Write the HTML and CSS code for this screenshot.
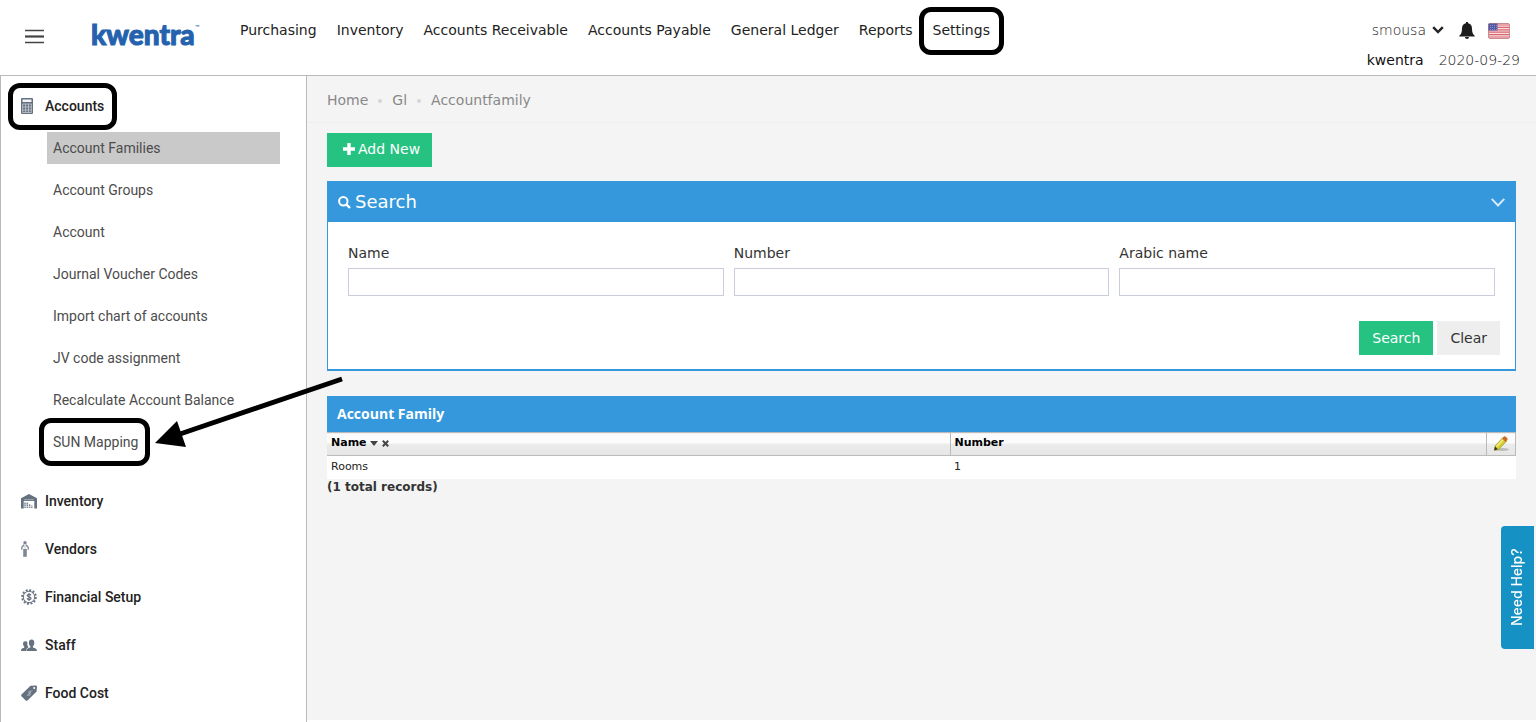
FILE: index.html
```html
<!DOCTYPE html>
<html lang="en">

<head>
    <meta charset="UTF-8">
    <meta name="viewport" content="width=device-width, initial-scale=1.0">
    <title>Account Family - kwentra</title>
    <link rel="stylesheet" href="styles.css">
</head>

<body>
    <header class="topbar">
        <button class="topbar__toggle" type="button" aria-label="Toggle menu">
            <svg width="19" height="15" viewBox="0 0 19 15">
                <path d="M0 1.500h19M0 13.500h19" stroke="#444" stroke-width="1.300" />
                <path d="M0 7.500h19" stroke="#444" stroke-width="2.200" />
            </svg>
        </button>
        <a class="logo" href="#">kwentra<span class="logo__tm">™</span></a>
        <nav class="topnav">
            <a class="topnav__link" href="#">Purchasing</a>
            <a class="topnav__link" href="#">Inventory</a>
            <a class="topnav__link" href="#">Accounts Receivable</a>
            <a class="topnav__link" href="#">Accounts Payable</a>
            <a class="topnav__link" href="#">General Ledger</a>
            <a class="topnav__link" href="#">Reports</a>
            <a class="topnav__link" href="#">Settings<span class="mark mark--settings"></span></a>
        </nav>
        <div class="account">
            <div class="account__row account__row--user">
                <button class="account__user" type="button">
                    smousa
                    <svg width="12" height="8" viewBox="0 0 12 8">
                        <path d="M1.2 1.2L6 6l4.800-4.800" fill="none" stroke="#222" stroke-width="2.400" />
                    </svg>
                </button>
                <button class="account__bell" type="button" aria-label="Notifications">
                    <svg width="16" height="17" viewBox="0 0 16 17">
                        <path d="M8 0c.8 0 1.200.5 1.200 1.200C11.800 1.800 13 3.800 13 6.500c0 4 .8 5.700 2.700 7.300v.7H.3v-.7C2.200 12.200 3 10.500 3 6.500c0-2.700 1.200-4.700 3.800-5.300C6.800.5 7.200 0 8 0zM6 15h4a2 2 0 0 1-4 0z" fill="#1c1c1c" />
                    </svg>
                </button>
                <svg class="account__flag" width="22" height="16" viewBox="0 0 22 16">
                    <rect x=".5" y=".5" width="21" height="15" rx="1.500" fill="#f7dfe0" stroke="#c98a90" />
                    <path d="M1 2h20M1 4.400h20M1 6.800h20M1 9.200h20M1 11.600h20M1 14h20" stroke="#dc6670" stroke-width="1.200" />
                    <rect x=".5" y=".5" width="9" height="7" fill="#5358a5" />
                    <path d="M2 2.500h7M2 4.500h7M2 6.500h7" stroke="#9a9dd0" stroke-width=".8" stroke-dasharray="1 1" />
                </svg>
            </div>
            <div class="account__row">
                <span>kwentra</span>
                <span class="account__date">2020-09-29</span>
            </div>
        </div>
    </header>

    <div class="page">
        <aside class="sidebar">
            <a class="section" href="#">
                <svg class="section__icon" width="16" height="16" viewBox="0 0 16 16">
                    <rect x="0" y="0" width="12" height="16" rx="1" fill="#667180" />
                    <path d="M1.500 1.500h9v2.500h-9z" fill="#f3f5f7" />
                    <path d="M1.500 6h9M1.500 9h9M1.500 12h9M1.500 14.500h9M1.700 6v8.500M4.600 6v8.500M7.500 6v8.500M10.300 6v8.500" stroke="#c5cbd2" stroke-width=".8" />
                </svg>
                Accounts
                <span class="mark mark--accounts"></span>
            </a>
            <div class="submenu">
                <a class="submenu__link submenu__link--active" href="#">Account Families</a>
                <a class="submenu__link" href="#">Account Groups</a>
                <a class="submenu__link" href="#">Account</a>
                <a class="submenu__link" href="#">Journal Voucher Codes</a>
                <a class="submenu__link" href="#">Import chart of accounts</a>
                <a class="submenu__link" href="#">JV code assignment</a>
                <a class="submenu__link" href="#">Recalculate Account Balance</a>
                <a class="submenu__link" href="#">SUN Mapping
                    <span class="mark mark--sun"></span>
                    <svg class="arrow" width="190" height="72" viewBox="0 0 190 72">
                        <path d="M187 3L25 58" stroke="#000" stroke-width="5" />
                        <path d="M0 67L22 45L31 71z" fill="#000" />
                    </svg>
                </a>
            </div>
            <a class="section" href="#">
                <svg class="section__icon" width="16" height="16" viewBox="0 0 16 16">
                    <path d="M0 15.500V5.200L8 1l8 4.200v10.300h-2.700V8H2.700v7.500z" fill="#667180" />
                    <path d="M3.200 6.700h9.600" stroke="#b8bfc7" stroke-width=".8" />
                    <path d="M4 15V9.500M6.300 15V9.500M8.600 15v-4M10.800 15v-2.500" stroke="#7d8793" stroke-width="1.500" stroke-dasharray="1.600 .3" />
                </svg>
                Inventory
            </a>
            <a class="section" href="#">
                <svg class="section__icon" width="16" height="16" viewBox="0 0 16 16">
                    <circle cx="4" cy="1.800" r="1.700" fill="#7d8793" />
                    <path d="M3 3.800L.8 6.300v2.500M5 3.800l2.200 2.500v2.500" fill="none" stroke="#7d8793" stroke-width="1.300" />
                    <path d="M2.200 8h3.600v7.800H2.200z" fill="#7d8793" />
                    <path d="M4 4.500v3" stroke="#b8bfc7" />
                </svg>
                Vendors
            </a>
            <a class="section" href="#">
                <svg class="section__icon" width="16" height="16" viewBox="0 0 16 16">
                    <circle cx="8" cy="8" r="6.900" fill="none" stroke="#667180" stroke-width="1.800" stroke-dasharray="2 1.612" />
                    <circle cx="8" cy="8" r="5.700" fill="none" stroke="#667180" />
                    <path d="M10 6.200C9.700 5.300 6.200 4.800 6.200 6.600c0 1.600 3.800 1 3.800 2.800 0 1.700-3.500 1.500-4-.1M8 4v8" fill="none" stroke="#667180" stroke-width="1.200" />
                </svg>
                Financial Setup
            </a>
            <a class="section" href="#">
                <svg class="section__icon" width="16" height="16" viewBox="0 0 16 16">
                    <path d="M0 14c0-2 .8-2.500 3.200-3.200V9.500C2.400 8.700 2 7.800 2 6.700 2 5 3 4.200 4.400 4.200c1 0 1.600.4 2 1C6 7.500 6.600 9 7.500 10.200L6 11.200 5 14z" fill="#667180" />
                    <path d="M5.500 14c.2-2.300 1-2.800 3.800-3.500V9.200C8.300 8.300 7.900 7.100 7.900 5.700c0-2 1-3.200 2.700-3.200s2.700 1.200 2.700 3.200c0 1.400-.4 2.600-1.400 3.500v1.300c2.800.7 3.900 1.200 4.100 3.500z" fill="#667180" />
                </svg>
                Staff
            </a>
            <a class="section" href="#">
                <svg class="section__icon" width="16" height="16" viewBox="0 0 16 16">
                    <path d="M9.500.8L15 .4q1 0 1 1l-.4 5.100L6.500 15.400q-.9.800-1.800 0L.5 11.200q-.8-.9 0-1.800z" fill="#667180" />
                    <circle cx="13.200" cy="2.900" r="1" fill="#fff" />
                    <path d="M9.500 6.300c-.8-.8-2.500.7-1.500 1.500s1.300.4 1.500 1.200c.2 1-1.800 1.800-2.400.7M6 10.800l5-5.300" fill="none" stroke="#c5cbd2" stroke-width=".8" />
                </svg>
                Food Cost
            </a>
        </aside>

        <main class="content">
            <nav class="breadcrumb">
                <a class="breadcrumb__link" href="#">Home</a>
                <a class="breadcrumb__link" href="#">Gl</a>
                <a class="breadcrumb__link" href="#">Accountfamily</a>
            </nav>

            <div class="content__body">
                <button class="btn btn--green btn--add" type="button">
                    <svg width="12" height="12" viewBox="0 0 12 12">
                        <path d="M6 0v12M0 6h12" stroke="#fff" stroke-width="3.400" />
                    </svg>
                    Add New
                </button>

                <form class="panel">
                    <div class="panel__head">
                        <svg width="13" height="13" viewBox="0 0 13 13">
                            <circle cx="5.300" cy="5.300" r="4.200" fill="none" stroke="#fff" stroke-width="2" />
                            <path d="M8.300 8.300l3.700 3.700" stroke="#fff" stroke-width="2.400" />
                        </svg>
                        <h2 class="panel__title">Search</h2>
                        <button class="panel__toggle" type="button" aria-label="Collapse">
                            <svg width="14" height="9" viewBox="0 0 14 9">
                                <path d="M.7.9L7 7.500 13.300.9" fill="none" stroke="#d5e9f8" stroke-width="2" />
                            </svg>
                        </button>
                    </div>
                    <div class="panel__fields">
                        <div class="field">
                            <label class="field__label" for="name">Name</label>
                            <input class="field__input" id="name" name="name" type="text">
                        </div>
                        <div class="field">
                            <label class="field__label" for="number">Number</label>
                            <input class="field__input" id="number" name="number" type="text">
                        </div>
                        <div class="field">
                            <label class="field__label" for="arabic">Arabic name</label>
                            <input class="field__input" id="arabic" name="arabic" type="text">
                        </div>
                    </div>
                    <div class="panel__actions">
                        <button class="btn btn--green" type="submit">Search</button>
                        <button class="btn btn--gray" type="reset">Clear</button>
                    </div>
                </form>

                <h3 class="grid-title">Account Family</h3>
                <table class="grid">
                    <thead>
                        <tr>
                            <th class="grid__name">Name
                                <svg width="8" height="5" viewBox="0 0 8 5">
                                    <path d="M0 0h8L4 5z" fill="#444" />
                                </svg>
                                <svg class="grid__clear" width="7" height="7" viewBox="0 0 7 7">
                                    <path d="M.8.8l5.400 5.400M6.200.8L.8 6.200" stroke="#444" stroke-width="2" />
                                </svg>
                            </th>
                            <th>Number</th>
                            <th class="grid__edit">
                                <svg width="16" height="16" viewBox="0 0 16 16">
                                    <ellipse cx="9.500" cy="13.500" rx="6.500" ry="1.500" fill="#bbb" />
                                    <path d="M2 10l8-8.500 3.700 3.500-8 8.500-4.200 1z" fill="#d5cf2f" stroke="#8b8620" stroke-width=".6" />
                                    <path d="M3.500 10.500l7-7.300" stroke="#f3f08c" stroke-width="1.400" />
                                    <path d="M9 2.500L11 .6q1-.6 1.800.2l1.500 1.500q.7.900 0 1.800l-1.800 1.900z" fill="#cf6a25" />
                                    <path d="M2 10.500L1.200 14.300l3.700-1z" fill="#2d3020" />
                                </svg>
                            </th>
                        </tr>
                    </thead>
                    <tbody>
                        <tr>
                            <td>Rooms</td>
                            <td>1</td>
                            <td></td>
                        </tr>
                    </tbody>
                </table>
                <p class="total">(1 total records)</p>
            </div>
        </main>
    </div>

    <button class="help" type="button">Need Help?</button>
</body>

</html>
```

FILE: styles.css
```css
* {
    box-sizing: border-box;
}

body {
    margin: 0;
    min-height: 100vh;
    display: flex;
    flex-direction: column;
    background: #fff;
    color: #333;
    font: 14px/20px "DejaVu Sans", sans-serif;
}

a {
    color: inherit;
    text-decoration: none;
}

button {
    padding: 0;
    border: 0;
    background: none;
    color: inherit;
    font: inherit;
    cursor: pointer;
}

svg {
    display: block;
    flex-shrink: 0;
}

/* topbar */
.topbar {
    display: flex;
    align-items: flex-start;
    height: 76px;
    padding: 20px 16px 0 25px;
    border-bottom: 1px solid #b9b9b9;
}

.topbar__toggle {
    margin-top: 9px;
}

.logo {
    display: flex;
    width: 149px;
    margin-left: 47px;
    color: #2462ae;
    font: 900 28px/28px Lato, sans-serif;
    -webkit-text-stroke: 1px #2462ae;
}

.logo__tm {
    font-size: 6px;
    font-weight: 400;
    line-height: 14px;
    -webkit-text-stroke: 0;
}

.topnav {
    display: flex;
    gap: 20px;
    color: #222;
}

.topnav__link {
    position: relative;
    white-space: nowrap;
}

.account {
    margin-left: auto;
    color: #111;
}

.account__row {
    display: flex;
    justify-content: flex-end;
    gap: 15px;
    height: 30px;
}

.account__row--user {
    padding-right: 10px;
}

.account__user {
    display: flex;
    align-items: center;
    gap: 6px;
    height: 20px;
    font-weight: 200;
}

.account__bell {
    height: 20px;
}

.account__flag {
    margin: 3px 0 0 -2px;
}

.account__date {
    font-weight: 200;
}

/* highlight boxes and arrow */
.mark {
    position: absolute;
    border: 5px solid #000;
    border-radius: 12px;
}

.mark--settings {
    inset: -13px -14px -15px;
}

.mark--accounts {
    left: 7px;
    top: 2px;
    width: 109px;
    height: 47px;
}

.mark--sun {
    left: -8px;
    top: -8px;
    width: 111px;
    height: 48px;
}

.arrow {
    position: absolute;
    left: 108px;
    top: -50px;
    z-index: 1;
}

/* layout */
.page {
    flex: 1;
    display: flex;
}

.sidebar {
    flex: 0 0 307px;
    padding-top: 5px;
    border: 1px solid #b9b9b9;
    border-width: 0 1px;
    font-family: Roboto, sans-serif;
}

.content {
    flex: 1;
    min-width: 0;
    margin-bottom: 2px;
    background: #f4f4f4;
}

.content__body {
    padding: 10px 20px;
}

/* sidebar */
.section {
    position: relative;
    display: flex;
    align-items: center;
    gap: 8px;
    height: 48px;
    padding: 1px 0 0 20px;
    color: #222;
    font-weight: 500;
}

.submenu {
    display: flex;
    flex-direction: column;
    gap: 10px;
    padding: 3px 26px 18px 46px;
}

.submenu__link {
    position: relative;
    height: 32px;
    padding-left: 6px;
    color: #4c4c4c;
    line-height: 32px;
}

.submenu__link--active {
    background: #c9c9c9;
}

/* breadcrumb */
.breadcrumb {
    display: flex;
    height: 47px;
    padding: 14px 20px 0;
    border-bottom: 1px solid #eee;
    color: #888;
}

.breadcrumb__link + .breadcrumb__link::before {
    content: "";
    display: inline-block;
    width: 4px;
    height: 4px;
    margin: 0 10px 2px;
    border-radius: 50%;
    background: #d5d5d5;
}

/* buttons */
.btn {
    height: 34px;
    padding: 0 13px;
}

.btn--green {
    background: #26c281;
    color: #fff;
}

.btn--gray {
    background: #eee;
}

.btn--add {
    display: flex;
    align-items: center;
    gap: 3px;
    padding: 0 12px 2px 16px;
}

/* search panel */
.panel {
    margin: 14px 0 25px;
    border: 1px solid #3598dc;
    border-bottom-width: 2px;
    background: #fff;
}

.panel__head {
    display: flex;
    align-items: center;
    gap: 4px;
    height: 40px;
    padding: 0 10px;
    background: #3598dc;
    color: #fff;
}

.panel__title {
    margin: 0;
    font-size: 18px;
    font-weight: 400;
}

.panel__toggle {
    margin-left: auto;
}

.panel__fields {
    display: grid;
    grid-template-columns: repeat(3, 1fr);
    gap: 10px;
    padding: 21px 20px 25px;
}

.field__label {
    display: block;
    margin-bottom: 5px;
}

.field__input {
    display: block;
    width: 100%;
    height: 28px;
    padding: 4px 8px;
    border: 1px solid #c9cddc;
    font: inherit;
}

.panel__actions {
    display: flex;
    justify-content: flex-end;
    gap: 4px;
    padding: 0 15px 14px;
}

/* results */
.grid-title {
    margin: 0;
    padding: 0 10px;
    background: #3598dc;
    color: #fff;
    font: 700 14px/36px "Open Sans", sans-serif;
}

.grid {
    width: 100%;
    border-collapse: collapse;
    table-layout: fixed;
    background: #fff;
    color: #222;
    font-size: 11px;
    line-height: 16px;
}

.grid th {
    height: 23px;
    padding: 0 4px 2px;
    border: 1px solid #bbb;
    border-width: 1px 0 1px 1px;
    background: linear-gradient(#fcfcfc 45%, #ececec 45%, #e6e6e6);
    color: #000;
    text-align: left;
}

.grid th:first-child {
    border-left: 0;
}

.grid th svg {
    display: inline-block;
    vertical-align: middle;
}

.grid td {
    height: 23px;
    padding: 0 4px;
}

.grid__name {
    width: 623px;
}

.grid .grid__edit {
    width: 29px;
    padding: 0 6px;
    border-right: 1px solid #bbb;
    line-height: 0;
}

.total {
    margin: 0;
    font-size: 12px;
    font-weight: 700;
    line-height: 16px;
}

/* help tab, text reads bottom to top */
.help {
    position: fixed;
    right: 2px;
    top: 526px;
    width: 33px;
    height: 123px;
    border-radius: 0 4px 4px 0;
    background: #1691c4;
    color: #fff;
    font: 500 14px/32px Inter, sans-serif;
    writing-mode: vertical-rl;
    transform: rotate(180deg);
}
```
